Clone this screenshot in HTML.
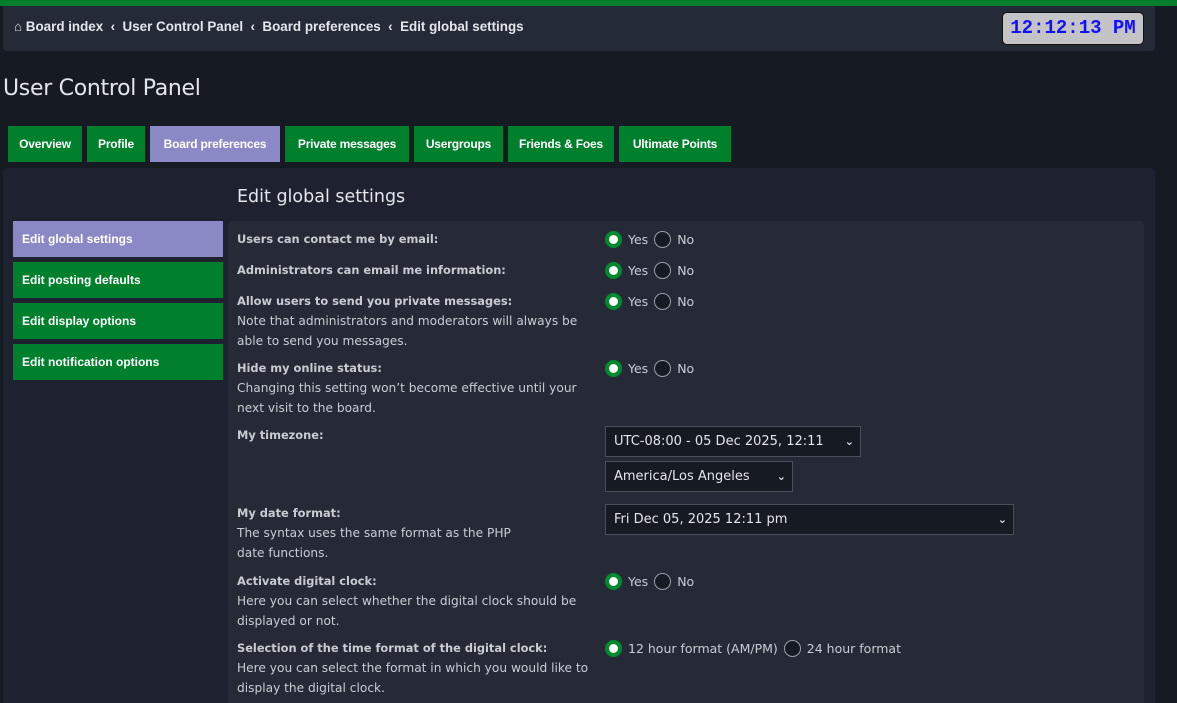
<!DOCTYPE html>
<html><head><meta charset="utf-8"><style>
*{box-sizing:border-box;margin:0;padding:0}
html{width:1177px;height:703px;overflow:hidden}
body{width:1177px;height:703px;overflow:hidden;background:#151a23;font-family:"DejaVu Sans","Liberation Sans",sans-serif;color:#c8ccd2;position:relative}
.top{position:absolute;left:0;top:0;width:1177px;height:6px;background:#007f2c}
.bc{position:absolute;left:3px;top:6px;width:1152px;height:45px;background:#252a37;border-radius:0 0 4px 4px}
.bc span{position:absolute;top:13px;left:11px;font:bold 13.4px "Liberation Sans",sans-serif;color:#e3e6ea;white-space:nowrap}
.clock{position:absolute;left:1002px;top:12px;width:142px;height:33px;background:#c4c4c6;border:1px solid #111;border-radius:5px;color:#1010ff;font:bold 19px "Liberation Mono",monospace;text-align:center;line-height:31px;white-space:nowrap;letter-spacing:0}
h1{position:absolute;left:3px;top:76px;font:normal 22px "DejaVu Sans",sans-serif;color:#e3e6ea;letter-spacing:-0.3px}
.tab{position:absolute;top:126px;height:36px;background:#007f2c;color:#fff;font:bold 12px "Liberation Sans",sans-serif;line-height:36px;text-align:center;letter-spacing:-0.2px}
.tab.a{background:#8b88c6}
.panel{position:absolute;left:3px;top:168px;width:1152px;height:535px;background:#1e2230;border-radius:5px 5px 0 0}
h2{position:absolute;left:237px;top:187px;font:normal 17.5px "DejaVu Sans",sans-serif;color:#e3e6ea}
.side{position:absolute;left:13px;width:210px;height:36px;background:#007f2c;color:#fff;font:bold 12px "Liberation Sans",sans-serif;line-height:36px;padding-left:9px}
.side.a{background:#8b88c6}
.inner{position:absolute;left:228px;top:221px;width:916px;height:482px;background:#252a36;border-radius:4px 4px 0 0}
.l{position:absolute;left:237px;font-size:12.2px;line-height:20px;color:#c8ccd2;width:355px}
.l b{font-size:11.4px}
.r{position:absolute;left:605px;font-size:12.5px;color:#c8ccd2;display:flex;align-items:center;height:20px}
.on,.off{display:inline-block;width:17px;height:17px;border-radius:50%;margin-right:6px}
.on{background:#fff;border:4px solid #008a2e}
.off{border:1.5px solid #9aa0a8;background:#151a23;margin-left:6px}
.sel{position:absolute;left:605px;height:31px;background:#151a23;border:1px solid #4a4f5a;color:#e3e6ea;font:13px "DejaVu Sans",sans-serif;line-height:29px;padding-left:8px}
.sel i{position:absolute;right:6px;top:0;font-style:normal;font-weight:bold;font-size:11px}
</style></head><body>
<div class="top"></div>
<div class="bc"><span>&#8962; Board index &nbsp;‹&nbsp; User Control Panel &nbsp;‹&nbsp; Board preferences &nbsp;‹&nbsp; Edit global settings</span></div>
<div class="clock">12:12:13 PM</div>
<h1>User Control Panel</h1>
<div class="tab" style="left:8px;width:74px">Overview</div>
<div class="tab" style="left:87px;width:58px">Profile</div>
<div class="tab a" style="left:150px;width:130px">Board preferences</div>
<div class="tab" style="left:285px;width:124px">Private messages</div>
<div class="tab" style="left:414px;width:89px">Usergroups</div>
<div class="tab" style="left:508px;width:106px">Friends &amp; Foes</div>
<div class="tab" style="left:619px;width:112px">Ultimate Points</div>
<div class="panel"></div>
<h2>Edit global settings</h2>
<div class="side a" style="top:221px">Edit global settings</div>
<div class="side" style="top:262px">Edit posting defaults</div>
<div class="side" style="top:303px">Edit display options</div>
<div class="side" style="top:344px">Edit notification options</div>
<div class="inner"></div>

<div class="l" style="top:229px"><b>Users can contact me by email:</b></div>
<div class="r" style="top:229px"><span class="on"></span>Yes<span class="off"></span>No</div>
<div class="l" style="top:260px"><b>Administrators can email me information:</b></div>
<div class="r" style="top:260px"><span class="on"></span>Yes<span class="off"></span>No</div>
<div class="l" style="top:291px"><b>Allow users to send you private messages:</b><br>Note that administrators and moderators will always be able to send you messages.</div>
<div class="r" style="top:291px"><span class="on"></span>Yes<span class="off"></span>No</div>
<div class="l" style="top:358px"><b>Hide my online status:</b><br>Changing this setting won’t become effective until your next visit to the board.</div>
<div class="r" style="top:358px"><span class="on"></span>Yes<span class="off"></span>No</div>
<div class="l" style="top:425px"><b>My timezone:</b></div>
<div class="sel" style="top:426px;width:256px">UTC-08:00 - 05 Dec 2025, 12:11<i>&#8964;</i></div>
<div class="sel" style="top:461px;width:188px">America/Los Angeles<i>&#8964;</i></div>
<div class="l" style="top:503px;width:300px"><b>My date format:</b><br>The syntax uses the same format as the PHP date functions.</div>
<div class="sel" style="top:504px;width:409px">Fri Dec 05, 2025 12:11 pm<i>&#8964;</i></div>
<div class="l" style="top:571px"><b>Activate digital clock:</b><br>Here you can select whether the digital clock should be displayed or not.</div>
<div class="r" style="top:571px"><span class="on"></span>Yes<span class="off"></span>No</div>
<div class="l" style="top:638px"><b>Selection of the time format of the digital clock:</b><br>Here you can select the format in which you would like to display the digital clock.</div>
<div class="r" style="top:638px"><span class="on"></span>12 hour format (AM/PM)<span class="off"></span>24 hour format</div>
</body></html>
